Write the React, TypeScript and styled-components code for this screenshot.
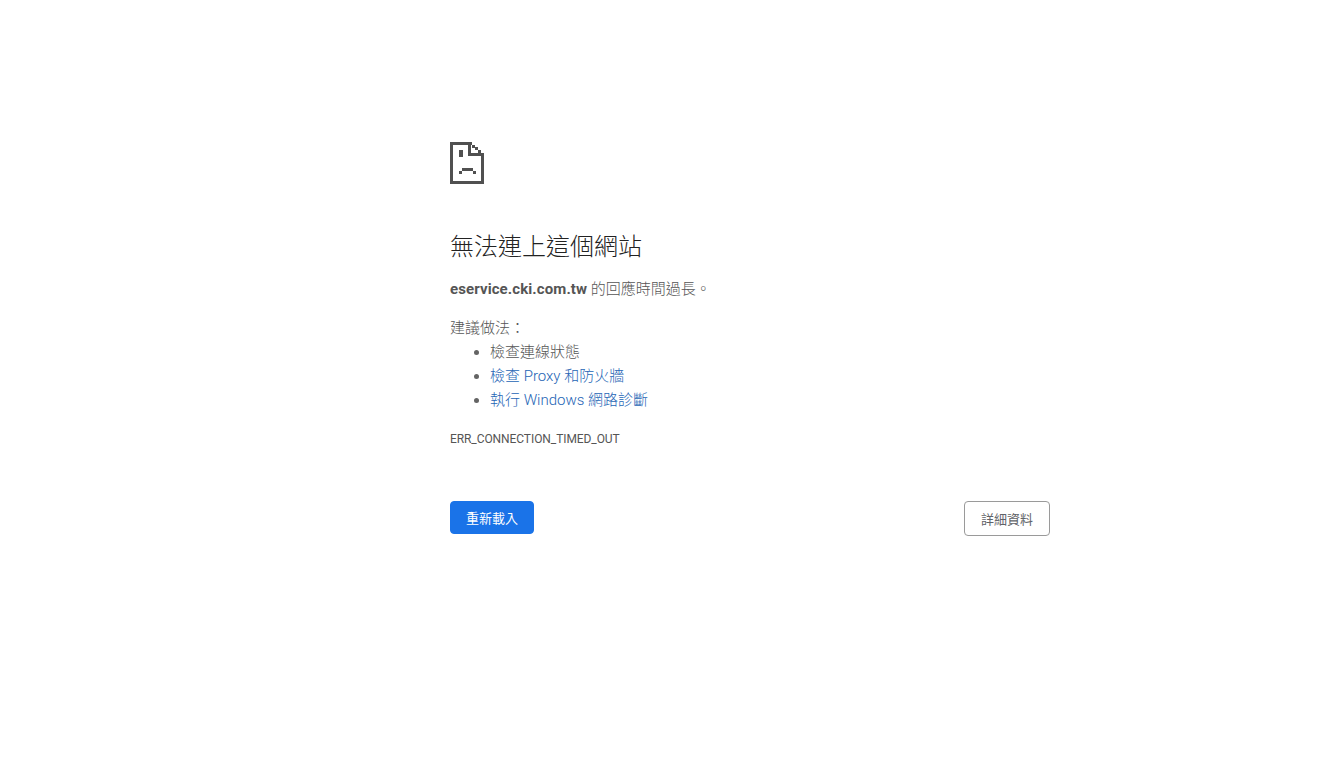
import React from 'react';
import styled, { createGlobalStyle } from 'styled-components';

const GlobalStyle = createGlobalStyle`
  html, body {
    margin: 0;
    padding: 0;
    background: #fff;
  }

  body {
    font-family: Roboto, 'Noto Sans CJK TC', sans-serif;
    font-size: 15px;
    font-weight: 300;
    line-height: 24px;
    color: #555;
  }
`;

const Page = styled.div`
  height: 758px;
  box-sizing: border-box;
  padding: 142px 0 0 450px;
`;

const Wrapper = styled.main`
  width: 600px;
`;

const SadFace = styled.svg`
  display: block;
  width: 34px;
  height: 42px;
  color: #505050;
`;

const Title = styled.h1`
  margin: 45px 0 0;
  font-size: 24px;
  font-weight: 300;
  line-height: 36px;
  color: #222;
`;

const Summary = styled.p`
  margin: 12px 0 0;
`;

const Host = styled.strong`
  font-weight: 700;
  letter-spacing: 0.1px;
`;

const SuggestionLabel = styled.p`
  margin: 15px 0 0;
`;

const Suggestions = styled.ul`
  margin: 0;
  padding: 0 0 0 40px;
`;

const Suggestion = styled.li`
  &::marker {
    color: #646464;
  }
`;

const SuggestionLink = styled.a`
  color: #2565b5;
  text-decoration: none;
`;

const ErrorCode = styled.div`
  margin-top: 15px;
  font-size: 12px;
  font-weight: 400;
  line-height: 24px;
  letter-spacing: -0.08px;
  text-transform: uppercase;
`;

const Actions = styled.div`
  display: flex;
  justify-content: space-between;
  align-items: flex-start;
  margin-top: 50px;
`;

const Button = styled.button<{ $primary?: boolean }>`
  box-sizing: border-box;
  height: ${(p) => (p.$primary ? 33 : 35)}px;
  width: ${(p) => (p.$primary ? 84 : 86)}px;
  padding: 0;
  border-radius: 4px;
  border: 1px solid ${(p) => (p.$primary ? '#1a73e8' : '#9a9a9a')};
  background: ${(p) => (p.$primary ? '#1a73e8' : '#fff')};
  color: ${(p) => (p.$primary ? '#fff' : '#5f6368')};
  font-family: inherit;
  font-size: 13px;
  font-weight: 400;
  cursor: pointer;
`;

const App: React.FC = () => (
  <>
    <GlobalStyle />
    <Page>
      <Wrapper>
        <SadFace viewBox="0 0 34 42" fill="currentColor" aria-hidden>
          <path d="M0 0h22v3H3v36h28V11h3v31H0z" />
          <path d="M18 0h3v11h13v3H18z" />
          <path d="M22 3h3v3h-3zM25 5h3v3h-3zM28 8h3v3h-3z" />
          <path d="M9 8h4v7H9z" />
          <path d="M12 26h11v3H12zM9 29h3v3H9zM23 29h3v3h-3z" />
        </SadFace>

        <Title>無法連上這個網站</Title>

        <Summary>
          <Host>eservice.cki.com.tw</Host> 的回應時間過長。
        </Summary>

        <SuggestionLabel>建議做法：</SuggestionLabel>
        <Suggestions>
          <Suggestion>檢查連線狀態</Suggestion>
          <Suggestion>
            <SuggestionLink href="#proxy">檢查 Proxy 和防火牆</SuggestionLink>
          </Suggestion>
          <Suggestion>
            <SuggestionLink href="#diagnostics">執行 Windows 網路診斷</SuggestionLink>
          </Suggestion>
        </Suggestions>

        <ErrorCode>ERR_CONNECTION_TIMED_OUT</ErrorCode>

        <Actions>
          <Button $primary>重新載入</Button>
          <Button>詳細資料</Button>
        </Actions>
      </Wrapper>
    </Page>
  </>
);

export default App;
